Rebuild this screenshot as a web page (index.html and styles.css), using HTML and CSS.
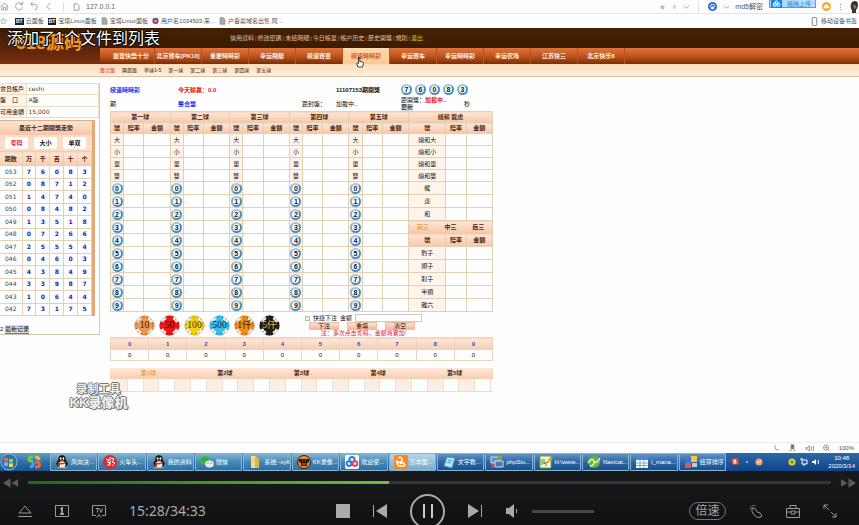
FILE: index.html
```
<!DOCTYPE html>
<html lang="zh-CN">
<head>
<meta charset="utf-8">
<meta name="viewport" content="width=device-width, initial-scale=1">
<title>極速時時彩</title>
<link rel="stylesheet" href="styles.css">
</head>
<body>
<svg class="defs" width="0" height="0">
<symbol id="doc" viewBox="0 0 8 10"><path d="M1 1h4l2 2v6H1z" fill="#aaa" stroke="#888"/></symbol>
<symbol id="star" viewBox="0 0 10 10"><path d="M5 1l1.2 2.7 3 .3-2.2 2 .6 3L5 7.5 2.4 9 3 6 .8 4l3-.3z"/></symbol>
<symbol id="chev" viewBox="0 0 8 8"><path d="M1 2.5l3 3 3-3" fill="none" stroke="#999"/></symbol>
<symbol id="qq" viewBox="0 0 14 14"><ellipse cx="7" cy="8.5" rx="5.6" ry="4" fill="#111"/><ellipse cx="7" cy="4.5" rx="3.8" ry="4.3" fill="#111"/><ellipse cx="7" cy="9.6" rx="3.4" ry="3.4" fill="#fff"/><ellipse cx="5.6" cy="3.5" rx=".9" ry="1.2" fill="#fff"/><ellipse cx="8.4" cy="3.5" rx=".9" ry="1.2" fill="#fff"/><path d="M4.5 5.5h5L7 7z" fill="#f90"/><path d="M3 7q4 2 8 0v1.6q-4 1.5-6 .8v2H3.8V9L3 8.6z" fill="#e22"/><path d="M2 13.2q0-1.4 2.5-1.4t2.5 1.4zM7 13.2q0-1.4 2.5-1.4t2.5 1.4z" fill="#f90"/></symbol>
<symbol id="cloud" viewBox="0 0 14 14"><g fill="none" stroke-width="2"><circle cx="7" cy="4.6" r="2.6" stroke="#2a7de0"/><circle cx="4" cy="8.6" r="2.4" stroke="#2a7de0"/><circle cx="10" cy="8.6" r="2.4" stroke="#e8455a"/></g></symbol>
</svg>

<div class="address">
<svg class="i9" viewBox="0 0 10 10"><path d="M1 5l4-4 4 4M2 4v5h2V6h2v3h2V4" fill="none" stroke="#999"/></svg>
<svg class="i9" viewBox="0 0 10 10"><path d="M8.5 6A4 4 0 1 1 8 2.5M8.5 0v3h-3" fill="none" stroke="#999"/></svg>
<svg class="i9" viewBox="0 0 10 10"><path d="M3 0L1 2.500l2 2.500M1 2.500h4q3 0 3 3T5 9" fill="none" stroke="#999"/></svg>
<svg class="i9" viewBox="0 0 10 10"><path d="M6 1L2 5l4 4" fill="none" stroke="#999"/></svg>
<i class="split"></i>
<svg class="i7" viewBox="0 0 8 10"><path d="M1 1h4l2 2v6H1z" fill="none" stroke="#888"/></svg>
<span class="url">127.0.0.1</span>
<span class="space"></span>
<svg class="i7" viewBox="0 0 10 10" fill="#bbb"><use href="#star"/></svg>
<svg class="i7" viewBox="0 0 8 8"><path d="M5 0L2 4h2L3 8l3-5H4z" fill="#bbb"/></svg>
<svg class="i7"><use href="#chev"/></svg>
<i class="split"></i>
<svg class="i9" viewBox="0 0 10 10"><circle cx="5" cy="5" r="5" fill="#2f66d8"/><g fill="#fff"><ellipse cx="5" cy="6.600" rx="2" ry="1.600"/><circle cx="2.500" cy="4.500" r=".8"/><circle cx="4" cy="2.800" r=".9"/><circle cx="6" cy="2.800" r=".9"/><circle cx="7.500" cy="4.500" r=".8"/></g></svg>
<svg class="i7"><use href="#chev"/></svg>
<span class="search">md5解密</span>
<span class="upload"><svg viewBox="0 0 14 10"><path d="M0 0h14v10H0z" fill="#1489e8"/><g fill="none" stroke="#fff" stroke-width="1.300"><circle cx="7" cy="3" r="1.700"/><circle cx="4.800" cy="6" r="1.800"/><circle cx="9.200" cy="6" r="1.800"/></g></svg><span>拖拽上传</span></span>
<svg class="i9" viewBox="0 0 10 10"><circle cx="5" cy="5" r="5" fill="#f9a825"/><path d="M2.500 7a1.300 1.300 0 0 1 .4-2.500 2 2 0 0 1 4 0A1.300 1.300 0 0 1 7.500 7z" fill="#fff"/></svg>
<svg class="i7" viewBox="0 0 8 8"><g fill="#888"><circle cx="4" cy="1" r=".7"/><circle cx="4" cy="4" r=".7"/><circle cx="4" cy="7" r=".7"/></g></svg>
<svg class="avatar" viewBox="0 0 10 12"><path d="M2 3q1-3 4-3t3 4q0 3-2 5v3H3V9Q1 7 2 3z" fill="#3a3130"/><path d="M4 4q2-1 3 1T5 8z" fill="#8a6f66"/></svg>
</div>

<div class="marks">
<svg class="i7 starline" viewBox="0 0 10 10" fill="none" stroke="#999"><use href="#star"/></svg>
<a href="#"><b class="bt">BT</b>云面板</a>
<a href="#"><b class="bt">BT</b>宝塔Linux面板</a>
<a href="#"><svg class="i7"><use href="#doc"/></svg>宝塔Linux面板</a>
<a href="#"><svg class="i7" viewBox="0 0 8 8"><circle cx="4" cy="4" r="3.500" fill="#2b55a8"/><path d="M1 0l3 3 3-3v4L4 7 1 4z" fill="#e33"/><circle cx="4" cy="4" r="1" fill="#fff"/></svg>用户名1034503:来...</a>
<a href="#"><svg class="i7"><use href="#doc"/></svg>户备案域名出售,阿...</a>
<span class="space"></span>
<a href="#"><svg class="i9" viewBox="0 0 10 10"><rect x="2.500" y=".5" width="5" height="9" rx="1" fill="none" stroke="#777"/></svg>移动设备书签</a>
</div>

<header>
<div class="logo">518源码</div>
<div class="head">
<div class="links"><a href="#">信用資料</a><a href="#">修改密碼</a><a href="#">未結明細</a><a href="#">今日帳單</a><a href="#">帳户历史</a><a href="#">歷史開獎</a><a href="#">規則</a><a href="#" class="exit">退出</a></div>
<nav><a href="#">廣東快樂十分</a><a href="#">北京賽车[PK10]</a><a href="#">重慶時時彩</a><a href="#">幸运飛艇</a><a href="#">極速賽車</a><a href="#" class="on">極速時時彩</a><a href="#">幸运賽车</a><a href="#">幸运時時彩</a><a href="#">幸运农场</a><a href="#">江苏快三</a><a href="#">北京快乐8</a></nav>
</div>
</header>
<div class="subnav"><a href="#" class="red">整合盤</a><a href="#">兩面盤</a><a href="#">单球1-5</a><a href="#">第一球</a><a href="#">第二球</a><a href="#">第三球</a><a href="#">第四球</a><a href="#">第五球</a></div>

<div class="content">
<aside>
<table class="user">
<tr><th>會员帳戶</th><td>ceshi</td></tr>
<tr><th>盤　口</th><td>A盤</td></tr>
<tr><th>可用金額</th><td>15,000</td></tr>
</table>
<div class="trend">
<h3>最近十二期開獎走勢</h3>
<div class="tabs"><button class="red">号码</button><button>大小</button><button>单双</button></div>
<table class="history">
<thead><tr><th>期数</th><th>万</th><th>千</th><th>百</th><th>十</th><th>个</th></tr></thead>
<tbody id="history"></tbody>
</table>
</div>
<div class="newest">2 <button>最新记录</button></div>
</aside>

<main>
<div class="info">
<b class="blue">極速時時彩</b><b class="red">今天輸贏：0.0</b><span></span><b class="issue">11107153期開獎</b><div class="drawn" id="drawn"></div>
<span>期</span><b class="blue">整合盤</b><span>距封盤：</span><span>加載中..</span><div class="open">距開獎：<b class="red">加載中..</b><button>更新</button></div><span>秒</span>
</div>
<table class="bets">
<colgroup id="cols"></colgroup>
<thead>
<tr><th colspan="3">第一球</th><th colspan="3">第二球</th><th colspan="3">第三球</th><th colspan="3">第四球</th><th colspan="3">第五球</th><th colspan="3">總和 龍虎</th></tr>
<tr id="subhead"></tr>
</thead>
<tbody id="bets"></tbody>
</table>

<div class="order">
<div class="chips" id="chips"></div>
<form onsubmit="return false">
<div class="amount"><input type="checkbox" id="quick"><label for="quick">快捷下注</label><label for="money">金额</label><input type="text" id="money"></div>
<div class="acts"><button>下注</button><button>重填</button><button>清空</button></div>
<p class="red">注：多次点击筹码，金额将累加!</p>
</form>
</div>

<table class="count">
<tr><th>0</th><th>1</th><th>2</th><th>3</th><th>4</th><th>5</th><th>6</th><th>7</th><th>8</th><th>9</th></tr>
<tr><td>0</td><td>0</td><td>0</td><td>0</td><td>0</td><td>0</td><td>0</td><td>0</td><td>0</td><td>0</td></tr>
</table>
<div class="balltabs"><a href="#" class="on">第1球</a><a href="#">第2球</a><a href="#">第3球</a><a href="#">第4球</a><a href="#">第5球</a></div>
<div class="stripes" id="stripes"></div>
</main>
</div>

<div class="status">
<svg class="i7" viewBox="0 0 8 8"><path d="M3 1Q1 4 4 6q2 1 3-1" fill="none" stroke="#888"/></svg>
<svg class="i7" viewBox="0 0 8 8"><path d="M2 0h4v5H2zM1 6h2v1H1zM5 6h2v1H5z" fill="#777"/></svg>
<svg class="i9" viewBox="0 0 10 8"><path d="M1 3h2l2-2v6L3 5H1zM7 2q1 2 0 4M9 1q1.500 3 0 6" fill="none" stroke="#888"/></svg>
<svg class="i7" viewBox="0 0 8 8"><path d="M3.500 2v3M2 3.500h3M5.500 5.500L8 8" stroke="#888"/><circle cx="3.500" cy="3.500" r="3" fill="none" stroke="#888"/></svg>
<span>100%</span>
</div>

<div class="taskbar">
<div class="launch">
<svg viewBox="0 0 18 18"><circle cx="9" cy="9" r="8" fill="#2c6fa8" stroke="#7fb8dc"/><path d="M4 5q2-1 4 0v3.500q-2-1-4 0z" fill="#f0673a"/><path d="M9 5.500q2 1 4 0V9q-2 1-4 0z" fill="#8fd04a"/><path d="M4 9.500q2-1 4 0V13q-2-1-4 0z" fill="#5cc3f0"/><path d="M9 10q2 1 4 0v3.500q-2 1-4 0z" fill="#fcd54a"/></svg>
<svg viewBox="0 0 18 18"><g fill="none" stroke-width="3"><path d="M8 4H6a2 2 0 0 0 0 4h2" stroke="#7ec242"/><path d="M10 4h1a3 3 0 0 1 3 3" stroke="#f0bd24"/><path d="M10 9h2a2 2 0 0 1 0 5h-2" stroke="#ea6a2c"/><path d="M8 9v2a3 3 0 0 1-3 3" stroke="#49a5e4"/></g></svg>
</div>
<div class="tasks">
<button><svg><use href="#qq"/></svg>风向决...</button>
<button><svg viewBox="0 0 14 14"><circle cx="7" cy="7" r="7" fill="#e02828"/><path d="M3 4l3 1-2 2 3 1-3 3M8 3l3 1-2 3 3 1-3 3M7 2v9" fill="none" stroke="#fff"/></svg>火车头...</button>
<button><svg><use href="#qq"/></svg>我的资料</button>
<button><svg viewBox="0 0 14 14"><ellipse cx="5" cy="5.500" rx="5" ry="4.500" fill="#3cb549"/><ellipse cx="9.500" cy="9" rx="4.300" ry="3.600" fill="#eee"/><g fill="#333"><circle cx="8" cy="8" r=".6"/><circle cx="11" cy="8" r=".6"/><circle cx="3.500" cy="4" r=".6"/><circle cx="6.500" cy="4" r=".6"/></g></svg>微信</button>
<button><svg viewBox="0 0 14 14"><path d="M3 1h5v12H3z" fill="#f5da80"/><path d="M7 2l4 1v10H7z" fill="#e2b548"/></svg>系统--xyft</button>
<button><svg viewBox="0 0 14 14"><circle cx="7" cy="7" r="6.500" fill="#f58a1f" stroke="#222"/><path d="M2 4h10v3l-2 1v3H4V8L2 7z" fill="#271a14"/><path d="M5 6h1M8 6h1M5 9h4" stroke="#f58a1f"/></svg>KK录像...</button>
<button><svg viewBox="0 0 14 14"><rect width="14" height="14" rx="2" fill="#fff"/><use href="#cloud"/></svg>欢迎使...</button>
<button class="lit"><svg viewBox="0 0 14 14"><rect width="14" height="14" rx="2" fill="#f58a1f"/><path d="M4 3q3-2 4 1t-3 3q-3 2 0 4 4 1 6-1-2-4-5-1M3 5q-1 3 1 3" fill="none" stroke="#fff" stroke-width="1.500"/></svg>万丰国...</button>
<button><svg viewBox="0 0 14 14"><path d="M5 2l8 1-3 10-8-2z" fill="#b8e8f5" stroke="#4298b8"/><path d="M6 5l4 1M5 7l4 1" stroke="#4298b8"/></svg>文字教...</button>
<button><svg viewBox="0 0 14 14"><path d="M1 2h8v6H1z" fill="#5e91c4" stroke="#ddd"/><path d="M5 6h8v6H5z" fill="#4b77b0" stroke="#ddd"/><path d="M8 1h4v4H8z" fill="#7a3"/><path d="M1 9h3v4H1z" fill="#c43"/></svg>phpStu...</button>
<button><svg viewBox="0 0 14 14"><path d="M1 1h11v12H1z" fill="#f4f7dc" stroke="#73a22e"/><path d="M3 4v6M5 4v5l2-2v4M8 8l4-6" stroke="#578414" fill="none"/><path d="M9 7l4-5" stroke="#e6a323" stroke-width="2"/></svg>H:\www...</button>
<button><svg viewBox="0 0 14 14"><circle cx="7" cy="7" r="6" fill="#68b52e"/><path d="M1 8q4-6 6-2t6-3M3 11q4 0 4-4" fill="none" stroke="#e8f5c8" stroke-width="1.500"/></svg>Navicat...</button>
<button><svg viewBox="0 0 14 14"><path d="M1 2h12v11H1z" fill="#fff"/><path d="M1 2h12v3H1z" fill="#3b8fd0"/><path d="M1 8h12M1 10.500h12M5 5v8M9 5v8" stroke="#7ba7c8"/></svg>i_mana...</button>
<button><svg viewBox="0 0 14 14"><path d="M1 3h6v5H1z" fill="#3f6fd8"/><path d="M7 1h6v6H7z" fill="#f6c534"/><path d="M1 8h6v5H1z" fill="#e2574c"/><path d="M8 8h5v4H8z" fill="#bcd"/></svg>结算排序</button>
</div>
<div class="tray">
<svg viewBox="0 0 8 8"><path d="M0 1l7-1 1 6-6 1z" fill="#e4512e"/><path d="M5 2H3v1.500h2V5H2" fill="none" stroke="#fff"/></svg>
<svg viewBox="0 0 8 8"><path d="M3 4h2" stroke="#fff"/></svg>
<svg viewBox="0 0 8 8"><circle cx="4" cy="4" r="3.500" fill="#f6a163"/><path d="M2 5l4-2" stroke="#fff"/></svg>
<span class="space"></span>
<svg viewBox="0 0 8 8"><circle cx="4" cy="4" r="3.500" fill="#f2cf27"/><path d="M4 2v4M2 4h4" stroke="#293"/></svg>
<svg viewBox="0 0 8 8"><path d="M2 2h5v4H2zM0 1h3M4 6v2" fill="none" stroke="#fff"/></svg>
<svg viewBox="0 0 8 8"><path d="M0 3h2l2-2v6L2 5H0z" fill="#fff"/><path d="M6 2q1 2 0 4" fill="none" stroke="#fff"/></svg>
<time>10:48<br>2020/3/14</time>
</div>
</div>

<div class="player">
<div class="seek">
<button aria-label="rewind"><svg viewBox="0 0 16 10"><path d="M8 0v10L0 5zM16 1v8L9 5z" fill="#5a5a5c"/></svg></button>
<div class="track"><div class="done"></div></div>
<button aria-label="forward"><svg viewBox="0 0 16 10"><path d="M8 0v10l8-5zM0 1v8l7-4z" fill="#5a5a5c"/></svg></button>
</div>
<div class="controls">
<div class="left">
<button aria-label="open"><svg viewBox="0 0 14 14"><path d="M7 2l6 7H1zM0 12.500h14" fill="none" stroke="#999"/></svg></button>
<button aria-label="single"><svg viewBox="0 0 14 14"><path d="M.5 1.500h13v11H.5z" fill="none" stroke="#999"/><path d="M5.500 5L7 4v6M5 10h4" fill="none" stroke="#bbb" stroke-width="1.500"/></svg></button>
<button aria-label="tv"><svg viewBox="0 0 14 14"><path d="M4 11.500H.5v-10h13v10H10M4 4.500h3M5.500 4.500v4M7.500 4.500l1.500 4 1.500-4M5 13.500l2-3 2 3" fill="none" stroke="#999"/></svg></button>
<span class="clock">15:28/34:33</span>
</div>
<div class="middle">
<button aria-label="stop"><svg viewBox="0 0 14 14"><path d="M0 0h14v14H0z" fill="#aaa"/></svg></button>
<button aria-label="previous"><svg viewBox="0 0 14 14"><path d="M.5 1v12" stroke="#aaa"/><path d="M14 0v14L3 7z" fill="#aaa"/></svg></button>
<button class="pause" aria-label="pause"><svg viewBox="0 0 14 14"><path d="M3 0v14M11 0v14" stroke="#ccc" stroke-width="2"/></svg></button>
<button aria-label="next"><svg viewBox="0 0 14 14"><path d="M13.500 1v12" stroke="#aaa"/><path d="M0 0v14l11-7z" fill="#aaa"/></svg></button>
<button class="vol" aria-label="volume"><svg viewBox="0 0 14 14"><path d="M1 4h3l5-4v14L4 10H1z" fill="#aaa"/><path d="M11.500 5v4" stroke="#aaa"/></svg></button>
<input type="range" aria-label="volume level" value="0">
</div>
<div class="right">
<button class="speed">倍速</button>
<button aria-label="trace"><svg viewBox="0 0 14 14"><path d="M3 4q3-1 4 2t4 3q3 2 1 4-4 2-7-2T3 4z" fill="none" stroke="#999"/><path d="M1 4v1M2 2v1M4 1v1M6 1v1" stroke="#999"/></svg></button>
<button aria-label="toolbox"><svg viewBox="0 0 14 14"><path d="M.5 4.500h13v9H.5zM4 4V1.500h6V4M.5 8H5M9 8h4.500M5 7h4v3H5z" fill="none" stroke="#999"/></svg></button>
<button aria-label="fullscreen"><svg viewBox="0 0 14 14"><path d="M1 5V1h4M1 1l5 5M13 9v4H9M13 13L8 8" fill="none" stroke="#999"/></svg></button>
</div>
</div>
</div>

<div class="toast">添加了1个文件到列表</div>
<div class="mark">录制工具<b>KK录像机</b></div>
<svg class="hand" viewBox="0 0 8 12"><path d="M2 11L.7 7.500l1-.6.8.8V1.500h1.300v4l3 .7q.7.300.6 1.500L6.500 11z" fill="#fff" stroke="#111" stroke-width=".8"/></svg>
<script src="script.js"></script>
</body>
</html>
```
FILE: styles.css
```
*{
margin:0;
padding:0;
box-sizing:border-box;
}
body{
height:100vh;
display:flex;
flex-direction:column;
overflow:hidden;
position:relative;
background:#fdfefd;
font-family:"Liberation Sans","Noto Sans CJK SC",sans-serif;
font-size:6px;
line-height:8px;
color:#111;
white-space:nowrap;
}
a{
color:inherit;
text-decoration:none;
}
button,input{
font:inherit;
color:inherit;
}
button{
border:0;
background:none;
}
svg{
display:block;
flex:none;
}
table{
border-collapse:collapse;
table-layout:fixed;
width:100%;
}
.defs{
position:absolute;
}
.red,.info .red{
color:#e8202a;
}
.blue{
color:#1230ee;
}
.space{
flex:1;
}
.i7{
width:7px;
height:8px;
}
.i9{
width:9px;
height:9px;
}

/* browser */
.address{
flex:none;
height:14px;
display:flex;
align-items:center;
gap:6px;
border-bottom:1px solid #e4e4e4;
color:#555;
}
.split{
width:1px;
height:10px;
margin:0 3px;
background:#ddd;
}
.address .split ~ .space ~ .i7{
margin-right:-1px;
}
.url{
font-size:7px;
color:#666;
}
.search{
font-size:7px;
}
.upload{
align-self:flex-start;
display:flex;
height:8px;
border:1px solid #46a2e8;
border-top:0;
background:#b5dcfa;
color:#2a83d8;
padding-right:4px;
gap:4px;
}
.upload svg{
width:13px;
height:8px;
}
.avatar{
width:10px;
height:12px;
}
.marks{
flex:none;
height:14px;
display:flex;
align-items:center;
gap:4px;
padding-right:2px;
color:#555;
}
.marks a{
display:flex;
align-items:center;
gap:2px;
}
.starline{
margin-right:4px;
}
.bt{
background:#222;
color:#fff;
font-size:5px;
line-height:7px;
padding:0 1px;
}

/* site header */
header{
flex:none;
display:flex;
height:36px;
background:linear-gradient(#452003,#351800);
}
.logo{
width:100px;
padding:6px 0 0 16px;
font-size:18px;
line-height:18px;
font-weight:bold;
color:#f59a1c;
background:linear-gradient(#3a1a04,#5e2509 60%,#7a3010);
}
.head{
flex:1;
}
.links{
height:20px;
display:flex;
align-items:center;
padding-left:130px;
color:#e0bf9c;
}
.links a + a::before{
content:"|";
margin:0 1px;
color:#c8914c;
}
.links .exit{
color:#b5d820;
}
nav{
height:16px;
display:flex;
padding-left:8px;
background:linear-gradient(#e0743c,#bf5520 50%,#7c2d06);
color:#fff0e0;
font-weight:bold;
}
nav a{
width:47px;
line-height:16px;
text-align:center;
border-right:1px solid #b55323;
}
nav .on{
background:linear-gradient(#fbd9ae,#fcc994);
color:#cf6024;
}
.subnav{
flex:none;
height:13px;
display:flex;
align-items:center;
gap:7px;
padding-left:100px;
font-size:5px;
color:#4b2008;
background:linear-gradient(#fddcb8,#fff0df);
border-bottom:1px solid #d8c29c;
}

.content{
flex:1;
min-height:0;
display:flex;
gap:10px;
padding-top:6px;
}

/* sidebar */
aside{
flex:none;
width:100px;
height:252px;
border-right:1px solid #dbc8ab;
border-bottom:1px solid #cfc6ae;
}
.user{
height:35px;
border-top:1px solid #dbc8ab;
border-bottom:1px solid #dbc8ab;
}
.user th{
width:26px;
font-weight:normal;
text-align:left;
background:#fff4e8;
}
.user td{
padding-left:2px;
font-family:"DejaVu Sans","Noto Sans CJK SC",sans-serif;
color:#444;
}
.user th,.user td{
border:1px solid #ecdcc4;
border-left:0;
}
.trend{
width:95px;
margin-top:2px;
border-right:3px solid #e3aa78;
}
.trend h3{
font-size:6px;
line-height:14px;
text-align:center;
color:#4c2412;
background:linear-gradient(#fde6d4,#f6c6a4);
border-top:1px solid #e2ae86;
}
.tabs{
display:flex;
justify-content:space-between;
padding:2px 6px 2px 5px;
background:#fbdcc6;
}
.tabs button{
width:23px;
height:12px;
border-radius:2px;
background:#fff;
font-weight:bold;
}
.history{
height:165px;
font-family:"DejaVu Sans","Noto Sans CJK SC",sans-serif;
text-align:center;
}
.history th:first-child{
width:22px;
}
.history th{
height:14px;
color:#4c2412;
background:linear-gradient(#fde6d4,#f8ceb0);
}
.history th,.history td{
border:1px solid #e0d2b8;
border-left:0;
}
.history td{
color:#1418d0;
font-weight:bold;
}
.history td:first-child{
color:#444;
font-weight:normal;
}
.newest{
padding-top:9px;
}
.newest button{
background:#ddd;
border-bottom:1px solid #777;
}

/* betting area */
main{
width:100%;
max-width:383px;
}
.info{
display:grid;
grid-template-columns:68px 124px 34px 65px 63px auto;
grid-template-rows:13px 15px;
align-items:center;
}
.info .issue{
grid-column:4;
}
.drawn{
grid-column:5 / 7;
display:flex;
gap:3px;
}
.open{
line-height:7px;
}
.open button{
display:block;
background:#ddd;
}
.ball{
display:block;
width:11px;
height:11px;
margin:auto;
border:2px solid #4a8cc0;
border-top-color:#9cc6e2;
border-left-color:#7cb0d6;
border-radius:50%;
background:#fff;
font-size:7px;
font-weight:bold;
line-height:7px;
text-align:center;
color:#111;
}
.drawn .ball{
margin:0;
}
.bets{
text-align:center;
}
.bets th,.bets td{
height:13px;
line-height:8px;
border:1px solid #e2d0b4;
}
.bets tr:nth-child(-n+4) td{
height:12px;
}
.bets thead th,.bets .sub{
height:11px;
color:#4c2412;
font-weight:bold;
background:linear-gradient(#fde6d6,#f7c8a8);
}
.bets tbody .name{
background:#fff4ea;
}
.pick{
display:flex;
justify-content:space-around;
}
.pick .on,.balltabs .on{
color:#f0a040;
}
.c1{
width:13px;
}
.c2{
width:20px;
}
.c3{
width:26px;
}
.c4{
width:37px;
}

.order{
display:flex;
gap:25px;
padding:2px 0 0 24px;
height:25px;
}
.chips{
display:flex;
align-items:center;
gap:4px;
}
.chips button{
width:21px;
height:21px;
}
.chips svg{
width:21px;
height:21px;
}
.chips text{
font:10px "Liberation Serif","Noto Sans CJK SC",serif;
text-anchor:middle;
}
.amount{
display:flex;
align-items:center;
height:8px;
gap:3px;
}
.amount input[type=checkbox]{
appearance:none;
width:5px;
height:5px;
border:1px solid #bbb;
background:#eee;
}
.amount input[type=text]{
width:67px;
height:8px;
border:1px solid #ccc;
background:#fff;
}
.acts{
display:flex;
gap:8px;
padding-left:4px;
}
.acts button{
width:30px;
height:8px;
line-height:6px;
background:linear-gradient(#fde3d3,#f3bb98);
border:1px solid #e6bfa4;
}
.order p{
text-align:center;
line-height:6px;
}
.count{
text-align:center;
}
.count th{
height:12px;
color:#2a50d8;
background:linear-gradient(#fde8da,#f8cdb0);
}
.count td{
height:11px;
}
.count th,.count td{
border:1px solid #e6d4bc;
}
.balltabs{
display:grid;
grid-template-columns:repeat(5,1fr);
margin-top:7px;
line-height:11px;
font-weight:bold;
text-align:center;
color:#4c2412;
background:linear-gradient(#fde8da,#f8cdb0);
}
.stripes{
display:grid;
grid-template-columns:repeat(24,1fr);
height:13px;
padding:0 2px;
border-bottom:1px solid #e8dccb;
}
.stripes i{
border-right:1px solid #ecdfd0;
}
.stripes i:nth-child(odd){
background:#fdeee4;
}

.status{
flex:none;
height:11px;
display:flex;
align-items:center;
justify-content:flex-end;
gap:9px;
padding-right:5px;
border-top:1px solid #eee;
color:#555;
}

/* windows taskbar */
.taskbar{
flex:none;
height:18px;
display:flex;
background:linear-gradient(#5f9fc6,#2f6da5 50%,#1c5592);
color:#fff;
}
.launch{
flex:none;
width:50px;
display:flex;
gap:7px;
}
.launch svg{
width:18px;
height:18px;
}
.tasks{
flex:1;
display:grid;
grid-template-columns:repeat(14,1fr);
gap:1px;
}
.tasks button{
display:flex;
align-items:center;
gap:2px;
min-width:0;
padding-left:4px;
overflow:hidden;
border:1px solid #83b5d5;
border-radius:1px;
background:linear-gradient(#80b4d4,#4788b6 50%,#2f70a6);
}
.tasks button:nth-child(n+9){
background:linear-gradient(#5f93c4,#2d66a4 50%,#1c5090);
}
.tasks .lit{
background:linear-gradient(#b9d3e5,#7eabcd);
}
.tasks svg{
width:14px;
height:14px;
}
.tray{
flex:none;
width:133px;
display:flex;
align-items:center;
gap:4px;
padding:0 4px 0 5px;
background:linear-gradient(#2c69a8,#0f4488);
}
.tray svg{
width:8px;
height:8px;
}
.tray time{
padding-left:4px;
text-align:center;
}

/* player */
.player{
flex:none;
height:54px;
background:linear-gradient(#18191b,#101112);
}
.seek{
display:flex;
align-items:center;
gap:10px;
height:23px;
padding:0 3px;
}
.seek svg{
width:15px;
height:10px;
}
.track{
flex:1;
height:3px;
background:#363638;
}
.done{
width:45%;
height:3px;
background:linear-gradient(90deg,#1f6a18,#6cc034);
}
.controls{
display:flex;
align-items:center;
height:34px;
}
.controls svg{
width:14px;
height:14px;
}
.left{
width:336px;
display:flex;
align-items:center;
gap:23px;
padding-left:18px;
}
.clock{
font-family:"Noto Sans",sans-serif;
font-size:14px;
line-height:16px;
color:#aaa;
}
.middle{
display:flex;
align-items:center;
gap:23px;
}
.pause{
width:35px;
height:35px;
border:2px solid #aaa;
border-radius:50%;
display:grid;
place-items:center;
}
.middle input{
appearance:none;
width:62px;
height:3px;
margin-left:-10px;
background:#48484a;
}
.middle input::-webkit-slider-thumb{
appearance:none;
width:0;
height:0;
}
.right{
flex:1;
display:flex;
align-items:center;
justify-content:flex-end;
gap:23px;
padding-right:22px;
}
.speed{
width:37px;
height:18px;
border:1px solid #777;
border-radius:9px;
font-size:12px;
line-height:16px;
color:#aaa;
}

/* overlays */
.toast{
position:absolute;
left:7px;
top:29px;
font-size:16px;
line-height:20px;
color:#fff;
text-shadow:1px 0 #000,-1px 0 #000,0 1px #000,0 -1px #000;
}
.mark{
position:absolute;
left:68px;
top:383px;
width:61px;
text-align:center;
font-size:11px;
line-height:13px;
font-weight:bold;
color:#eee;
text-shadow:1px 0 #777,-1px 0 #777,0 1px #777,0 -1px #777,1px 1px #777;
}
.mark b{
display:block;
font-size:13px;
}
.hand{
position:absolute;
left:356px;
top:56px;
width:8px;
height:12px;
}
```
FILE: script.js
```
let get=(id)=>document.getElementById(id);
let ball=(n)=>'<span class="ball">'+n+'</span>';

// last twelve draws
let draws=["053 76083","052 08712","051 14740","050 08482","049 13518","048 07266","047 25554","046 04603","045 43849","044 33987","043 10644","042 73175"];
get("history").innerHTML=draws.map((d)=>{
let [no,nums]=d.split(" ");
return "<tr><td>"+no+"</td>"+[...nums].map((n)=>"<td>"+n+"</td>").join("")+"</tr>";
}).join("");

get("drawn").innerHTML=[7,6,0,8,3].map(ball).join("");

// bet table
get("cols").innerHTML='<col class="c1"><col class="c2"><col class="c3">'.repeat(5)+'<col class="c4"><col class="c2"><col class="c3">';
get("subhead").innerHTML="<th>號</th><th>賠率</th><th>金額</th>".repeat(6);
let names=["大","小","單","雙"];
let sums=["總和大","總和小","總和單","總和雙","龍","虎","和","","","豹子","順子","對子","半順","雜六"];
let rows="";
for(let i=0;i<14;i++){
let name=i<4?names[i]:ball(i-4);
rows+="<tr>"+('<td class="name">'+name+"</td><td></td><td></td>").repeat(5);
if(i==7){
rows+='<td class="sub" colspan="3"><div class="pick"><a href="#" class="on">前三</a><a href="#">中三</a><a href="#">后三</a></div></td>';
}
else if(i==8){
rows+='<td class="sub">號</td><td class="sub">賠率</td><td class="sub">金額</td>';
}
else{
rows+='<td class="name">'+sums[i]+"</td><td></td><td></td>";
}
rows+="</tr>";
}
get("bets").innerHTML=rows;

// chips
let chips=[["10","#f0954e","#222"],["50","#e81818","#400"],["100","#f2cf18","#432"],["500","#3cbdec","#123"],["1仟","#f58a14","#421"],["5仟","#1c1c1c","#e8b82c"]];
get("chips").innerHTML=chips.map((c)=>'<button><svg viewBox="0 0 22 22"><circle cx="11" cy="11" r="10" fill="#fff" stroke="#888" stroke-width=".5"/><circle cx="11" cy="11" r="8.500" fill="none" stroke="'+c[1]+'" stroke-width="4" stroke-dasharray="7.350 6" stroke-dashoffset="3.700"/><circle cx="11" cy="11" r="8.800" fill="none" stroke="#444" stroke-width="1" stroke-dasharray="1 3"/><circle cx="11" cy="11" r="7.500" fill="'+c[1]+'"/><text x="11" y="14" fill="'+c[2]+'">'+c[0]+'</text></svg></button>').join("");

get("stripes").innerHTML="<i></i>".repeat(24);
```
